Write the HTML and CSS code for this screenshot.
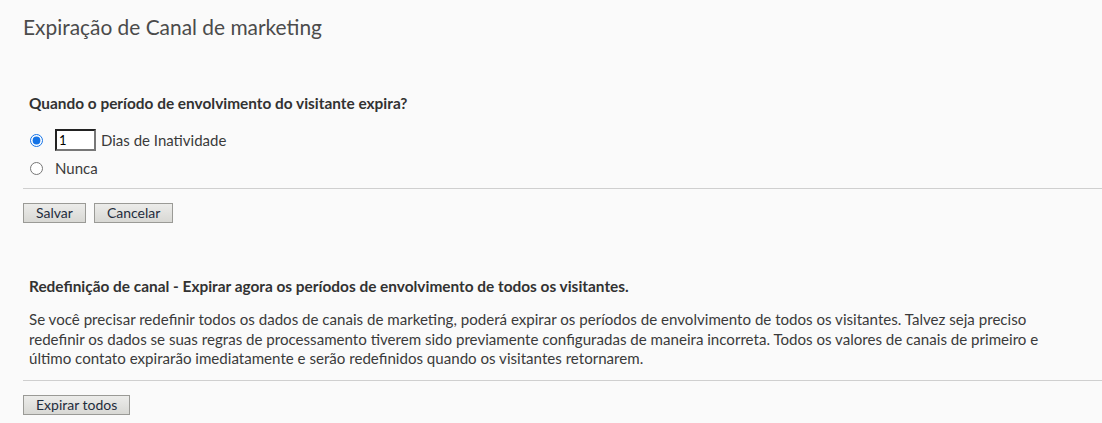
FILE: index.html
```html
<!DOCTYPE html>
<html lang="pt">
<head>
<meta charset="utf-8">
<title>Expiração de Canal de marketing</title>
<link rel="stylesheet" href="styles.css">
</head>
<body>
<div class="page">
  <h1 class="title">Expiração de Canal de marketing</h1>

  <section class="block block-expire">
    <h2 class="heading">Quando o período de envolvimento do visitante expira?</h2>
    <div class="options">
      <label class="option">
        <input class="radio" type="radio" name="exp" checked>
        <input class="days" type="text" value="1">
        <span>Dias de Inatividade</span>
      </label>
      <label class="option">
        <input class="radio" type="radio" name="exp">
        <span>Nunca</span>
      </label>
    </div>
    <hr class="rule">
    <div class="actions">
      <button class="btn" type="button">Salvar</button>
      <button class="btn" type="button">Cancelar</button>
    </div>
  </section>

  <section class="block block-reset">
    <h2 class="heading">Redefinição de canal - Expirar agora os períodos de envolvimento de todos os visitantes.</h2>
    <p class="text">Se você precisar redefinir todos os dados de canais de marketing, poderá expirar os períodos de envolvimento de todos os visitantes. Talvez seja preciso redefinir os dados se suas regras de processamento tiverem sido previamente configuradas de maneira incorreta. Todos os valores de canais de primeiro e último contato expirarão imediatamente e serão redefinidos quando os visitantes retornarem.</p>
    <hr class="rule rule-2">
    <div class="actions">
      <button class="btn" type="button">Expirar todos</button>
    </div>
  </section>
</div>
</body>
</html>
```
FILE: styles.css
```css
* { box-sizing: border-box; }
html, body { margin: 0; padding: 0; }
body {
  background: #fafafa;
  color: #3a3a3a;
  font-family: Lato, "Liberation Sans", sans-serif;
  font-size: 14.65px;
  width: 1102px;
  height: 423px;
  overflow: hidden;
}
.page { padding-left: 23px; }
.title {
  margin: 0;
  padding-top: 15px;
  font-size: 20.9px;
  line-height: 24px;
  font-weight: 400;
  color: #4b4b4b;
}
.block { padding: 0; }
.block-expire { margin-top: 54px; }
.heading {
  margin: 0 0 0 6px;
  font-size: 15.4px;
  line-height: 20px;
  font-weight: 700;
  color: #323232;
}
.options {
  margin: 16px 0 0 7px;
  display: flex;
  flex-direction: column;
  gap: 6px;
}
.option {
  display: flex;
  align-items: center;
  height: 22px;
  font-size: 15px;
  color: #3a3a3a;
}
.radio {
  margin: 0 12px 0 0;
  width: 13px;
  height: 13px;
  accent-color: #1473e6;
}
.days {
  width: 41px;
  height: 22px;
  margin: 0 5px 0 0;
  padding: 0 2px;
  border: 2px solid #222;
  border-right-color: #777;
  border-bottom-color: #777;
  background: #fff;
  font: 13px Lato, "Liberation Sans", sans-serif;
  color: #000;
}
.rule {
  margin: 9px 0 0 0;
  border: 0;
  border-top: 1px solid #cfcfcf;
  height: 0;
}
.actions {
  margin-top: 14px;
  display: flex;
  gap: 8px;
}
.btn {
  height: 20px;
  padding: 0 12px;
  border: 1px solid #9a9a96;
  background: linear-gradient(#ececea, #d8d8d4);
  font: 14px Lato, "Liberation Sans", sans-serif;
  line-height: 18px;
  color: #1f2d3d;
  border-radius: 0;
}
.block-reset { margin-top: 53px; }
.text {
  margin: 14px 0 0 6px;
  font-size: 15.1px;
  line-height: 19.5px;
  color: #3a3a3a;
  width: 1030px;
}
.rule-2 { margin-top: 11px; }
```
